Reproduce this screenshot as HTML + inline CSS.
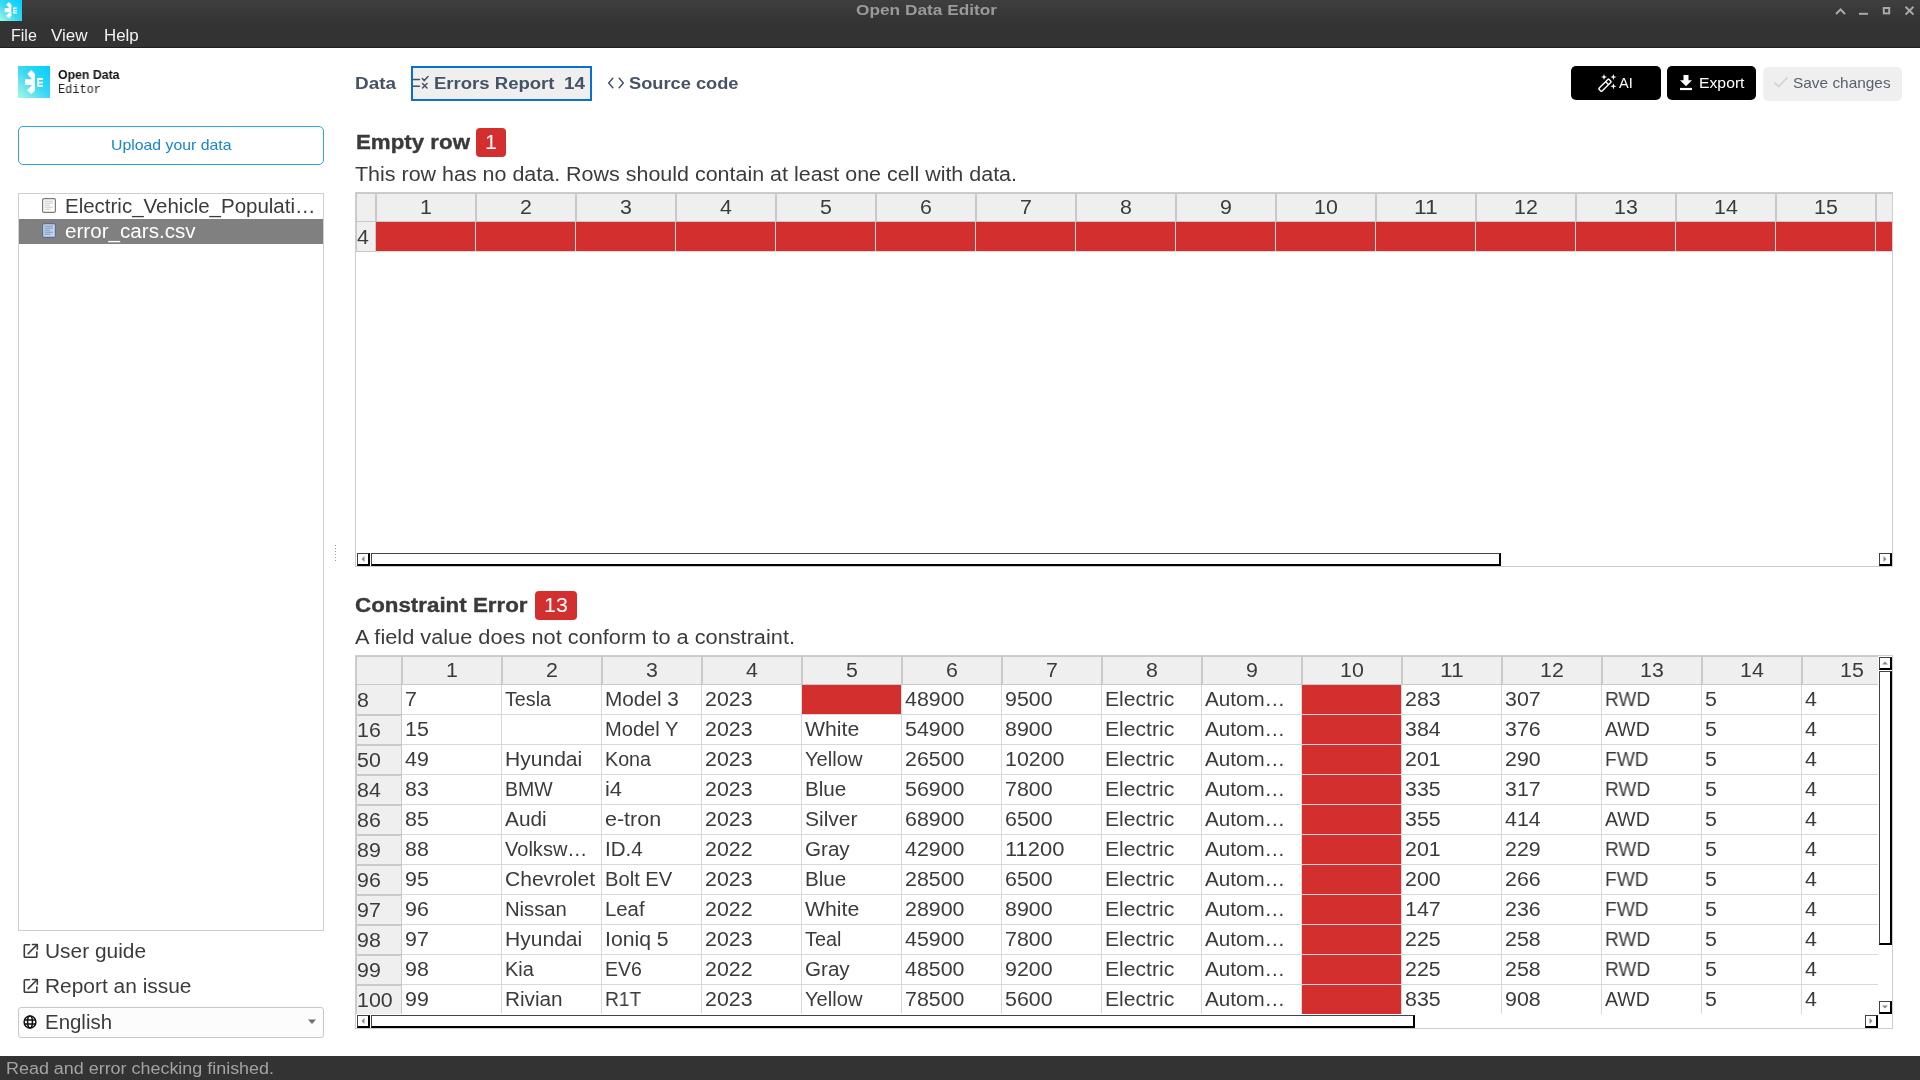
<!DOCTYPE html>
<html><head><meta charset="utf-8"><title>Open Data Editor</title>
<style>
html,body{margin:0;padding:0;width:1920px;height:1080px;overflow:hidden;background:#fff}
body>div{position:absolute}
.t{white-space:nowrap;transform-origin:0 50%;will-change:transform}
</style></head><body>
<div style="left:0px;top:0px;width:1920px;height:47px;background:linear-gradient(#3f3f3f 0px,#333 24px,#333 47px)"></div>
<div style="left:0px;top:47px;width:1920px;height:1px;background:#1f1f1f"></div>
<svg style="position:absolute;left:0;top:0" width="22" height="21" viewBox="0 0 22 21">
<defs><linearGradient id="g1" x1="0" y1="1" x2="1" y2="0"><stop offset="0" stop-color="#a8f8e8"/><stop offset="0.45" stop-color="#38d8f2"/><stop offset="1" stop-color="#00ceff"/></linearGradient></defs>
<rect width="22" height="21" fill="url(#g1)"/>
<g transform="translate(-0.1 -0.7) scale(0.68)"><path d="M13.2 4 L17 8 L17 13.7 Q15.9 16.3 17 19.3 L17 24.7 L13.2 28 L9 24.3 L14 19 L7 19 L7 13.2 L14 13.2 L9.2 8 Z" fill="#fff"/><path d="M19.3 12H25V14H21V15.8H25V17.5H21V19H25V20.7H19.3Z" fill="#fff"/></g>
</svg>
<div class="t" style="left:856.00px;top:2px;font-size:15px;line-height:15px;color:#9a9a9a;font-weight:bold;transform:scaleX(1.1509);font-family:'Liberation Sans',sans-serif;">Open Data Editor</div>
<svg style="position:absolute;left:1830px;top:0" width="90" height="22" viewBox="0 0 90 22">
<g stroke="#a9a9a9" stroke-width="2" fill="none">
<path d="M6 14 L10.5 9.5 L15 14"/>
<path d="M29 13.8 L38 13.8"/>
<rect x="53.8" y="8" width="5.4" height="5.4"/>
<path d="M75.5 6.8 L83.5 14.6 M83.5 6.8 L75.5 14.6"/>
</g></svg>
<div class="t" style="left:10.60px;top:28px;font-size:16px;line-height:16px;color:#f2f2f2;transform:scaleX(0.9890);font-family:'Liberation Sans',sans-serif;">File</div>
<div class="t" style="left:51.40px;top:28px;font-size:16px;line-height:16px;color:#f2f2f2;transform:scaleX(1.0642);font-family:'Liberation Sans',sans-serif;">View</div>
<div class="t" style="left:104.20px;top:28px;font-size:16px;line-height:16px;color:#f2f2f2;transform:scaleX(1.0545);font-family:'Liberation Sans',sans-serif;">Help</div>
<div style="left:0px;top:1056px;width:1920px;height:24px;background:#333"></div>
<div class="t" style="left:6.00px;top:1061px;font-size:16px;line-height:16px;color:#a3a3a3;transform:scaleX(1.1201);font-family:'Liberation Sans',sans-serif;">Read and error checking finished.</div>
<svg style="position:absolute;left:18px;top:66px" width="32" height="32" viewBox="0 0 32 32">
<defs><linearGradient id="g2" x1="0" y1="1" x2="1" y2="0"><stop offset="0" stop-color="#a6f8e6"/><stop offset="0.5" stop-color="#3ad8f2"/><stop offset="1" stop-color="#00ceff"/></linearGradient></defs>
<rect width="32" height="32" fill="url(#g2)"/>
<path d="M13.2 4 L17 8 L17 13.7 Q15.9 16.3 17 19.3 L17 24.7 L13.2 28 L9 24.3 L14 19 L7 19 L7 13.2 L14 13.2 L9.2 8 Z" fill="#fff"/><path d="M19.3 12H25V14H21V15.8H25V17.5H21V19H25V20.7H19.3Z" fill="#fff"/>
</svg>
<div class="t" style="left:58.00px;top:69px;font-size:12.5px;line-height:12.5px;color:#111;font-weight:bold;transform:scaleX(0.9838);font-family:'Liberation Sans',sans-serif;">Open Data</div>
<div class="t" style="left:58.40px;top:84px;font-size:12.5px;line-height:12.5px;color:#222;transform:scaleX(0.9554);font-family:'Liberation Mono',monospace;">Editor</div>
<div style="left:18px;top:126px;width:306px;height:39px;box-sizing:border-box;border:1px solid #2aa4ea;border-radius:5px;background:#fff"></div>
<div class="t" style="left:110.50px;top:137px;font-size:15px;line-height:15px;color:#1a86d0;transform:scaleX(1.0547);font-family:'Liberation Sans',sans-serif;">Upload your data</div>
<div style="left:18px;top:193px;width:306px;height:738px;box-sizing:border-box;border:1px solid #cfcfcf;background:#fff"></div>
<div style="left:19px;top:219px;width:304px;height:25px;background:#808080"></div>
<svg style="position:absolute;left:42px;top:198px" width="14" height="15" viewBox="0 0 14 15">
<rect x="0.6" y="0.6" width="12.8" height="13.8" rx="1.5" fill="#fff" stroke="#7a7a7a" stroke-width="1.2"/>
<g stroke="#bdbdbd" stroke-width="0.8"><path d="M2.5 3.2H11M2.5 5.2H11M2.5 7.2H8M2.5 9.2H11M2.5 11.2H8.5"/></g></svg>
<svg style="position:absolute;left:42px;top:223px" width="14" height="15" viewBox="0 0 14 15">
<rect x="0.6" y="0.6" width="12.8" height="13.8" rx="1.5" fill="#c3d5ee" stroke="#59708f" stroke-width="1.2"/>
<g stroke="#6f87a8" stroke-width="0.8"><path d="M2.5 3.2H11M2.5 5.2H11M2.5 7.2H8M2.5 9.2H11M2.5 11.2H8.5"/></g></svg>
<div class="t" style="left:64.50px;top:197px;font-size:19.5px;line-height:19.5px;color:#3b3b3b;transform:scaleX(1.0504);font-family:'Liberation Sans',sans-serif;">Electric_Vehicle_Populati…</div>
<div class="t" style="left:64.50px;top:222px;font-size:19.5px;line-height:19.5px;color:#ffffff;transform:scaleX(1.0574);font-family:'Liberation Sans',sans-serif;">error_cars.csv</div>
<svg style="position:absolute;left:23px;top:943px" width="16" height="16" viewBox="0 0 16 16">
<g stroke="#3b3b3b" stroke-width="1.6" fill="none" stroke-linecap="round" stroke-linejoin="round">
<path d="M6.5 1.8H2.2Q1.3 1.8 1.3 2.7V13.4Q1.3 14.3 2.2 14.3H12.9Q13.8 14.3 13.8 13.4V9"/>
<path d="M9.5 1.5H14.3V6.3"/><path d="M14 1.8L5.2 10.6"/></g></svg>
<div class="t" style="left:45.00px;top:942px;font-size:19.5px;line-height:19.5px;color:#3b3b3b;transform:scaleX(1.0710);font-family:'Liberation Sans',sans-serif;">User guide</div>
<svg style="position:absolute;left:23px;top:978px" width="16" height="16" viewBox="0 0 16 16">
<g stroke="#3b3b3b" stroke-width="1.6" fill="none" stroke-linecap="round" stroke-linejoin="round">
<path d="M6.5 1.8H2.2Q1.3 1.8 1.3 2.7V13.4Q1.3 14.3 2.2 14.3H12.9Q13.8 14.3 13.8 13.4V9"/>
<path d="M9.5 1.5H14.3V6.3"/><path d="M14 1.8L5.2 10.6"/></g></svg>
<div class="t" style="left:45.00px;top:977px;font-size:19.5px;line-height:19.5px;color:#3b3b3b;transform:scaleX(1.0726);font-family:'Liberation Sans',sans-serif;">Report an issue</div>
<div style="left:18px;top:1007px;width:306px;height:31px;box-sizing:border-box;border:1px solid #c9c9c9;border-radius:3px;background:#fcfcfc"></div>
<svg style="position:absolute;left:23px;top:1015px" width="14" height="14" viewBox="0 0 14 14">
<g stroke="#111" stroke-width="1.5" fill="none"><circle cx="7" cy="7" r="5.9"/><ellipse cx="7" cy="7" rx="2.4" ry="5.9"/><path d="M1.2 5H12.8M1.2 9H12.8"/></g></svg>
<div class="t" style="left:44.50px;top:1013px;font-size:19.5px;line-height:19.5px;color:#3b3b3b;transform:scaleX(1.0476);font-family:'Liberation Sans',sans-serif;">English</div>
<svg style="position:absolute;left:307px;top:1019px" width="10" height="6" viewBox="0 0 10 6"><path d="M1 0.5H9L5 5Z" fill="#6e6e6e"/></svg>
<div style="left:335px;top:545px;width:1px;height:1px;background:#9a9a9a"></div>
<div style="left:335px;top:548px;width:1px;height:1px;background:#9a9a9a"></div>
<div style="left:335px;top:551px;width:1px;height:1px;background:#9a9a9a"></div>
<div style="left:335px;top:554px;width:1px;height:1px;background:#9a9a9a"></div>
<div style="left:335px;top:557px;width:1px;height:1px;background:#9a9a9a"></div>
<div style="left:335px;top:560px;width:1px;height:1px;background:#9a9a9a"></div>
<div class="t" style="left:354.50px;top:76px;font-size:16px;line-height:16px;color:#465266;font-weight:bold;transform:scaleX(1.1822);font-family:'Liberation Sans',sans-serif;">Data</div>
<div style="left:411px;top:66px;width:181px;height:35px;box-sizing:border-box;border:2px solid #0a6fd3;background:#efefef"></div>
<svg style="position:absolute;left:412px;top:75px" width="18" height="16" viewBox="0 0 18 16">
<g stroke="#465266" stroke-width="1.5" fill="none" stroke-linecap="round">
<path d="M1 4.5H7.5M1 11.3H7.5"/><path d="M10.3 3.6L12.2 5.6L16 1.6"/><path d="M10.5 8.5L15 13M15 8.5L10.5 13"/></g></svg>
<div class="t" style="left:433.80px;top:76px;font-size:16px;line-height:16px;color:#465266;font-weight:bold;transform:scaleX(1.1584);font-family:'Liberation Sans',sans-serif;">Errors Report</div>
<div class="t" style="left:563.50px;top:76px;font-size:16px;line-height:16px;color:#465266;font-weight:bold;transform:scaleX(1.1799);font-family:'Liberation Sans',sans-serif;">14</div>
<svg style="position:absolute;left:606px;top:76px" width="20" height="14" viewBox="0 0 20 14">
<g stroke="#465266" stroke-width="1.5" fill="none" stroke-linecap="round" stroke-linejoin="round">
<path d="M6.8 2.2L2.7 7L6.8 11.8"/><path d="M13.2 2.2L17.3 7L13.2 11.8"/></g></svg>
<div class="t" style="left:628.60px;top:76px;font-size:16px;line-height:16px;color:#465266;font-weight:bold;transform:scaleX(1.1402);font-family:'Liberation Sans',sans-serif;">Source code</div>
<div style="left:1571px;top:66px;width:90px;height:34px;background:#000;border-radius:5px"></div>
<svg style="position:absolute;left:1597px;top:72.5px" width="20" height="20" viewBox="0 0 20 20">
<g fill="#fff"><path d="M7 0.9L7.8 3.2L10.1 4L7.8 4.8L7 7.1L6.2 4.8L3.9 4L6.2 3.2Z"/><path d="M16.4 0.9L17.2 3.2L19.5 4L17.2 4.8L16.4 7.1L15.6 4.8L13.3 4L15.6 3.2Z"/><path d="M16.4 10.2L17.2 12.5L19.5 13.3L17.2 14.1L16.4 16.4L15.6 14.1L13.3 13.3L15.6 12.5Z"/></g>
<g transform="translate(3 17.2) rotate(-45)"><rect x="0" y="-2" width="14" height="4" rx="0.6" fill="none" stroke="#fff" stroke-width="1.4"/><path d="M10 -2V2" stroke="#fff" stroke-width="1.4"/></g>
</svg>
<div class="t" style="left:1618.50px;top:76px;font-size:14.5px;line-height:14.5px;color:#fff;transform:scaleX(0.9854);font-family:'Liberation Sans',sans-serif;">AI</div>
<div style="left:1667px;top:66px;width:89px;height:34px;background:#000;border-radius:5px"></div>
<svg style="position:absolute;left:1679px;top:74px" width="14" height="17" viewBox="0 0 14 17">
<g fill="#fff"><rect x="4.5" y="1" width="5" height="6"/><path d="M1 6.2H13L7 12.3Z"/><rect x="1" y="13.9" width="12" height="2.2"/></g></svg>
<div class="t" style="left:1698.50px;top:76px;font-size:14.5px;line-height:14.5px;color:#fff;transform:scaleX(1.0857);font-family:'Liberation Sans',sans-serif;">Export</div>
<div style="left:1763px;top:67px;width:139px;height:34px;background:#efefef;border-radius:5px"></div>
<svg style="position:absolute;left:1773px;top:75px" width="16" height="14" viewBox="0 0 16 14"><path d="M1.5 7.5L5.5 11.5L14.5 2.5" stroke="#d2d2d2" stroke-width="1.6" fill="none"/></svg>
<div class="t" style="left:1793.00px;top:76px;font-size:14.5px;line-height:14.5px;color:#59616e;transform:scaleX(1.0620);font-family:'Liberation Sans',sans-serif;">Save changes</div>
<div class="t" style="left:355.50px;top:133px;font-size:19.5px;line-height:19.5px;color:#3a3a3a;font-weight:bold;transform:scaleX(1.1436);font-family:'Liberation Sans',sans-serif;-webkit-text-stroke:0.35px #3a3a3a">Empty row</div>
<div style="left:476px;top:128px;width:30px;height:29px;background:#d32f2f;border-radius:4px"></div>
<div class="t" style="left:484.60px;top:133px;font-size:19.5px;line-height:19.5px;color:#fff;transform:scaleX(1.0953);font-family:'Liberation Sans',sans-serif;">1</div>
<div class="t" style="left:354.50px;top:165px;font-size:19.5px;line-height:19.5px;color:#3b3b3b;transform:scaleX(1.1004);font-family:'Liberation Sans',sans-serif;">This row has no data. Rows should contain at least one cell with data.</div>
<div class="t" style="left:355.00px;top:596px;font-size:19.5px;line-height:19.5px;color:#3a3a3a;font-weight:bold;transform:scaleX(1.1454);font-family:'Liberation Sans',sans-serif;-webkit-text-stroke:0.35px #3a3a3a">Constraint Error</div>
<div style="left:535px;top:591px;width:42px;height:29px;background:#d32f2f;border-radius:4px"></div>
<div class="t" style="left:543.50px;top:596px;font-size:19.5px;line-height:19.5px;color:#fff;transform:scaleX(1.0953);font-family:'Liberation Sans',sans-serif;">13</div>
<div class="t" style="left:355.00px;top:628px;font-size:19.5px;line-height:19.5px;color:#3b3b3b;transform:scaleX(1.1151);font-family:'Liberation Sans',sans-serif;">A field value does not conform to a constraint.</div>
<div style="left:355px;top:192px;width:1538px;height:375px;box-sizing:border-box;border:1px solid #cdcdcd;background:#fff"></div>
<div style="left:356px;top:193px;width:1536px;height:1px;background:#c9c9c9"></div>
<div style="left:356px;top:194px;width:1536px;height:27px;background:#efefef"></div>
<div style="left:356px;top:221px;width:1536px;height:1px;background:#c9c9c9"></div>
<div style="left:356px;top:194px;width:1px;height:57px;background:#c9c9c9"></div>
<div style="left:357px;top:222px;width:18px;height:29px;background:#efefef"></div>
<div style="left:356px;top:251px;width:20px;height:1px;background:#c9c9c9"></div>
<div style="left:375px;top:194px;width:2px;height:27px;background:#c9c9c9"></div>
<div style="left:375px;top:222px;width:1px;height:29px;background:#c9c9c9"></div>
<div style="left:376px;top:222px;width:99px;height:29px;background:#d32f2f"></div>
<div style="left:475px;top:194px;width:2px;height:27px;background:#c9c9c9"></div>
<div style="left:475px;top:222px;width:1px;height:29px;background:#d6d6d6"></div>
<div class="t" style="left:419.56px;top:198px;font-size:19.5px;line-height:19.5px;color:#3b3b3b;transform:scaleX(1.0953);font-family:'Liberation Sans',sans-serif;">1</div>
<div style="left:476px;top:222px;width:99px;height:29px;background:#d32f2f"></div>
<div style="left:575px;top:194px;width:2px;height:27px;background:#c9c9c9"></div>
<div style="left:575px;top:222px;width:1px;height:29px;background:#d6d6d6"></div>
<div class="t" style="left:519.56px;top:198px;font-size:19.5px;line-height:19.5px;color:#3b3b3b;transform:scaleX(1.0953);font-family:'Liberation Sans',sans-serif;">2</div>
<div style="left:576px;top:222px;width:99px;height:29px;background:#d32f2f"></div>
<div style="left:675px;top:194px;width:2px;height:27px;background:#c9c9c9"></div>
<div style="left:675px;top:222px;width:1px;height:29px;background:#d6d6d6"></div>
<div class="t" style="left:619.56px;top:198px;font-size:19.5px;line-height:19.5px;color:#3b3b3b;transform:scaleX(1.0953);font-family:'Liberation Sans',sans-serif;">3</div>
<div style="left:676px;top:222px;width:99px;height:29px;background:#d32f2f"></div>
<div style="left:775px;top:194px;width:2px;height:27px;background:#c9c9c9"></div>
<div style="left:775px;top:222px;width:1px;height:29px;background:#d6d6d6"></div>
<div class="t" style="left:719.56px;top:198px;font-size:19.5px;line-height:19.5px;color:#3b3b3b;transform:scaleX(1.0953);font-family:'Liberation Sans',sans-serif;">4</div>
<div style="left:776px;top:222px;width:99px;height:29px;background:#d32f2f"></div>
<div style="left:875px;top:194px;width:2px;height:27px;background:#c9c9c9"></div>
<div style="left:875px;top:222px;width:1px;height:29px;background:#d6d6d6"></div>
<div class="t" style="left:819.56px;top:198px;font-size:19.5px;line-height:19.5px;color:#3b3b3b;transform:scaleX(1.0953);font-family:'Liberation Sans',sans-serif;">5</div>
<div style="left:876px;top:222px;width:99px;height:29px;background:#d32f2f"></div>
<div style="left:975px;top:194px;width:2px;height:27px;background:#c9c9c9"></div>
<div style="left:975px;top:222px;width:1px;height:29px;background:#d6d6d6"></div>
<div class="t" style="left:919.56px;top:198px;font-size:19.5px;line-height:19.5px;color:#3b3b3b;transform:scaleX(1.0953);font-family:'Liberation Sans',sans-serif;">6</div>
<div style="left:976px;top:222px;width:99px;height:29px;background:#d32f2f"></div>
<div style="left:1075px;top:194px;width:2px;height:27px;background:#c9c9c9"></div>
<div style="left:1075px;top:222px;width:1px;height:29px;background:#d6d6d6"></div>
<div class="t" style="left:1019.56px;top:198px;font-size:19.5px;line-height:19.5px;color:#3b3b3b;transform:scaleX(1.0953);font-family:'Liberation Sans',sans-serif;">7</div>
<div style="left:1076px;top:222px;width:99px;height:29px;background:#d32f2f"></div>
<div style="left:1175px;top:194px;width:2px;height:27px;background:#c9c9c9"></div>
<div style="left:1175px;top:222px;width:1px;height:29px;background:#d6d6d6"></div>
<div class="t" style="left:1119.56px;top:198px;font-size:19.5px;line-height:19.5px;color:#3b3b3b;transform:scaleX(1.0953);font-family:'Liberation Sans',sans-serif;">8</div>
<div style="left:1176px;top:222px;width:99px;height:29px;background:#d32f2f"></div>
<div style="left:1275px;top:194px;width:2px;height:27px;background:#c9c9c9"></div>
<div style="left:1275px;top:222px;width:1px;height:29px;background:#d6d6d6"></div>
<div class="t" style="left:1219.56px;top:198px;font-size:19.5px;line-height:19.5px;color:#3b3b3b;transform:scaleX(1.0953);font-family:'Liberation Sans',sans-serif;">9</div>
<div style="left:1276px;top:222px;width:99px;height:29px;background:#d32f2f"></div>
<div style="left:1375px;top:194px;width:2px;height:27px;background:#c9c9c9"></div>
<div style="left:1375px;top:222px;width:1px;height:29px;background:#d6d6d6"></div>
<div class="t" style="left:1313.62px;top:198px;font-size:19.5px;line-height:19.5px;color:#3b3b3b;transform:scaleX(1.0953);font-family:'Liberation Sans',sans-serif;">10</div>
<div style="left:1376px;top:222px;width:99px;height:29px;background:#d32f2f"></div>
<div style="left:1475px;top:194px;width:2px;height:27px;background:#c9c9c9"></div>
<div style="left:1475px;top:222px;width:1px;height:29px;background:#d6d6d6"></div>
<div class="t" style="left:1413.62px;top:198px;font-size:19.5px;line-height:19.5px;color:#3b3b3b;transform:scaleX(1.1736);font-family:'Liberation Sans',sans-serif;">11</div>
<div style="left:1476px;top:222px;width:99px;height:29px;background:#d32f2f"></div>
<div style="left:1575px;top:194px;width:2px;height:27px;background:#c9c9c9"></div>
<div style="left:1575px;top:222px;width:1px;height:29px;background:#d6d6d6"></div>
<div class="t" style="left:1513.62px;top:198px;font-size:19.5px;line-height:19.5px;color:#3b3b3b;transform:scaleX(1.0953);font-family:'Liberation Sans',sans-serif;">12</div>
<div style="left:1576px;top:222px;width:99px;height:29px;background:#d32f2f"></div>
<div style="left:1675px;top:194px;width:2px;height:27px;background:#c9c9c9"></div>
<div style="left:1675px;top:222px;width:1px;height:29px;background:#d6d6d6"></div>
<div class="t" style="left:1613.62px;top:198px;font-size:19.5px;line-height:19.5px;color:#3b3b3b;transform:scaleX(1.0953);font-family:'Liberation Sans',sans-serif;">13</div>
<div style="left:1676px;top:222px;width:99px;height:29px;background:#d32f2f"></div>
<div style="left:1775px;top:194px;width:2px;height:27px;background:#c9c9c9"></div>
<div style="left:1775px;top:222px;width:1px;height:29px;background:#d6d6d6"></div>
<div class="t" style="left:1713.62px;top:198px;font-size:19.5px;line-height:19.5px;color:#3b3b3b;transform:scaleX(1.0953);font-family:'Liberation Sans',sans-serif;">14</div>
<div style="left:1776px;top:222px;width:99px;height:29px;background:#d32f2f"></div>
<div style="left:1875px;top:194px;width:2px;height:27px;background:#c9c9c9"></div>
<div style="left:1875px;top:222px;width:1px;height:29px;background:#d6d6d6"></div>
<div class="t" style="left:1813.62px;top:198px;font-size:19.5px;line-height:19.5px;color:#3b3b3b;transform:scaleX(1.0953);font-family:'Liberation Sans',sans-serif;">15</div>
<div style="left:1876px;top:222px;width:16px;height:29px;background:#d32f2f"></div>
<div style="left:376px;top:251px;width:1516px;height:1px;background:#d9d9d9"></div>
<div class="t" style="left:357.00px;top:228px;font-size:19.5px;line-height:19.5px;color:#3b3b3b;transform:scaleX(1.0953);font-family:'Liberation Sans',sans-serif;">4</div>
<div style="left:357px;top:553px;width:13px;height:13px;box-sizing:border-box;background:#fff;border-left:1px solid #444;border-top:1px solid #444;border-right:2px solid #000;border-bottom:2px solid #000"></div>
<svg style="position:absolute;left:0;top:0;width:1920px;height:1080px;overflow:visible" width="1920" height="1080"><path d="M364.5 556.0L361.5 559.0L364.5 562.0Z" fill="#8a8a8a"/></svg>
<div style="left:371px;top:553px;width:130px;height:13px;box-sizing:border-box;background:#fff;border-left:1px solid #444;border-top:1px solid #444;border-right:2px solid #000;border-bottom:2px solid #000"></div>
<div style="left:369px;top:553px;width:1px;height:13px;background:#000"></div>
<div style="left:371px;top:553px;width:1130px;height:13px;box-sizing:border-box;background:#fff;border-left:1px solid #444;border-top:1px solid #444;border-right:2px solid #000;border-bottom:2px solid #000"></div>
<div style="left:1879px;top:553px;width:13px;height:13px;box-sizing:border-box;background:#fff;border-left:1px solid #444;border-top:1px solid #444;border-right:2px solid #000;border-bottom:2px solid #000"></div>
<svg style="position:absolute;left:0;top:0;width:1920px;height:1080px;overflow:visible" width="1920" height="1080"><path d="M1883.5 556.0L1886.5 559.0L1883.5 562.0Z" fill="#8a8a8a"/></svg>
<div style="left:355px;top:655px;width:1538px;height:374px;box-sizing:border-box;border:1px solid #cdcdcd;background:#fff"></div>
<div style="left:356px;top:656px;width:1522px;height:1px;background:#c9c9c9"></div>
<div style="left:357px;top:657px;width:1521px;height:27px;background:#efefef"></div>
<div style="left:356px;top:657px;width:1px;height:357px;background:#c9c9c9"></div>
<div style="left:357px;top:684px;width:1521px;height:1px;background:#c9c9c9"></div>
<div style="left:357px;top:685px;width:44px;height:329px;background:#efefef"></div>
<div style="left:401px;top:657px;width:2px;height:27px;background:#c9c9c9"></div>
<div style="left:401px;top:685px;width:1px;height:329px;background:#c9c9c9"></div>
<div class="t" style="left:445.56px;top:661px;font-size:19.5px;line-height:19.5px;color:#3b3b3b;transform:scaleX(1.0953);font-family:'Liberation Sans',sans-serif;">1</div>
<div style="left:501px;top:657px;width:2px;height:27px;background:#c9c9c9"></div>
<div class="t" style="left:545.56px;top:661px;font-size:19.5px;line-height:19.5px;color:#3b3b3b;transform:scaleX(1.0953);font-family:'Liberation Sans',sans-serif;">2</div>
<div style="left:601px;top:657px;width:2px;height:27px;background:#c9c9c9"></div>
<div class="t" style="left:645.56px;top:661px;font-size:19.5px;line-height:19.5px;color:#3b3b3b;transform:scaleX(1.0953);font-family:'Liberation Sans',sans-serif;">3</div>
<div style="left:701px;top:657px;width:2px;height:27px;background:#c9c9c9"></div>
<div class="t" style="left:745.56px;top:661px;font-size:19.5px;line-height:19.5px;color:#3b3b3b;transform:scaleX(1.0953);font-family:'Liberation Sans',sans-serif;">4</div>
<div style="left:801px;top:657px;width:2px;height:27px;background:#c9c9c9"></div>
<div class="t" style="left:845.56px;top:661px;font-size:19.5px;line-height:19.5px;color:#3b3b3b;transform:scaleX(1.0953);font-family:'Liberation Sans',sans-serif;">5</div>
<div style="left:901px;top:657px;width:2px;height:27px;background:#c9c9c9"></div>
<div class="t" style="left:945.56px;top:661px;font-size:19.5px;line-height:19.5px;color:#3b3b3b;transform:scaleX(1.0953);font-family:'Liberation Sans',sans-serif;">6</div>
<div style="left:1001px;top:657px;width:2px;height:27px;background:#c9c9c9"></div>
<div class="t" style="left:1045.56px;top:661px;font-size:19.5px;line-height:19.5px;color:#3b3b3b;transform:scaleX(1.0953);font-family:'Liberation Sans',sans-serif;">7</div>
<div style="left:1101px;top:657px;width:2px;height:27px;background:#c9c9c9"></div>
<div class="t" style="left:1145.56px;top:661px;font-size:19.5px;line-height:19.5px;color:#3b3b3b;transform:scaleX(1.0953);font-family:'Liberation Sans',sans-serif;">8</div>
<div style="left:1201px;top:657px;width:2px;height:27px;background:#c9c9c9"></div>
<div class="t" style="left:1245.56px;top:661px;font-size:19.5px;line-height:19.5px;color:#3b3b3b;transform:scaleX(1.0953);font-family:'Liberation Sans',sans-serif;">9</div>
<div style="left:1301px;top:657px;width:2px;height:27px;background:#c9c9c9"></div>
<div class="t" style="left:1339.62px;top:661px;font-size:19.5px;line-height:19.5px;color:#3b3b3b;transform:scaleX(1.0953);font-family:'Liberation Sans',sans-serif;">10</div>
<div style="left:1401px;top:657px;width:2px;height:27px;background:#c9c9c9"></div>
<div class="t" style="left:1439.62px;top:661px;font-size:19.5px;line-height:19.5px;color:#3b3b3b;transform:scaleX(1.1736);font-family:'Liberation Sans',sans-serif;">11</div>
<div style="left:1501px;top:657px;width:2px;height:27px;background:#c9c9c9"></div>
<div class="t" style="left:1539.62px;top:661px;font-size:19.5px;line-height:19.5px;color:#3b3b3b;transform:scaleX(1.0953);font-family:'Liberation Sans',sans-serif;">12</div>
<div style="left:1601px;top:657px;width:2px;height:27px;background:#c9c9c9"></div>
<div class="t" style="left:1639.62px;top:661px;font-size:19.5px;line-height:19.5px;color:#3b3b3b;transform:scaleX(1.0953);font-family:'Liberation Sans',sans-serif;">13</div>
<div style="left:1701px;top:657px;width:2px;height:27px;background:#c9c9c9"></div>
<div class="t" style="left:1739.62px;top:661px;font-size:19.5px;line-height:19.5px;color:#3b3b3b;transform:scaleX(1.0953);font-family:'Liberation Sans',sans-serif;">14</div>
<div style="left:1801px;top:657px;width:2px;height:27px;background:#c9c9c9"></div>
<div class="t" style="left:1839.62px;top:661px;font-size:19.5px;line-height:19.5px;color:#3b3b3b;transform:scaleX(1.0953);font-family:'Liberation Sans',sans-serif;">15</div>
<div class="t" style="left:357.30px;top:691px;font-size:19.5px;line-height:19.5px;color:#3b3b3b;transform:scaleX(1.0953);font-family:'Liberation Sans',sans-serif;">8</div>
<div class="t" style="left:405.30px;top:690px;font-size:19.5px;line-height:19.5px;color:#3b3b3b;transform:scaleX(1.0953);font-family:'Liberation Sans',sans-serif;">7</div>
<div class="t" style="left:505.30px;top:690px;font-size:19.5px;line-height:19.5px;color:#3b3b3b;transform:scaleX(1.0121);font-family:'Liberation Sans',sans-serif;">Tesla</div>
<div class="t" style="left:605.30px;top:690px;font-size:19.5px;line-height:19.5px;color:#3b3b3b;transform:scaleX(1.0648);font-family:'Liberation Sans',sans-serif;">Model 3</div>
<div class="t" style="left:705.30px;top:690px;font-size:19.5px;line-height:19.5px;color:#3b3b3b;transform:scaleX(1.0953);font-family:'Liberation Sans',sans-serif;">2023</div>
<div style="left:802px;top:685px;width:99px;height:29px;background:#d32f2f"></div>
<div class="t" style="left:905.30px;top:690px;font-size:19.5px;line-height:19.5px;color:#3b3b3b;transform:scaleX(1.0953);font-family:'Liberation Sans',sans-serif;">48900</div>
<div class="t" style="left:1005.30px;top:690px;font-size:19.5px;line-height:19.5px;color:#3b3b3b;transform:scaleX(1.0953);font-family:'Liberation Sans',sans-serif;">9500</div>
<div class="t" style="left:1105.30px;top:690px;font-size:19.5px;line-height:19.5px;color:#3b3b3b;transform:scaleX(1.0822);font-family:'Liberation Sans',sans-serif;">Electric</div>
<div class="t" style="left:1205.30px;top:690px;font-size:19.5px;line-height:19.5px;color:#3b3b3b;transform:scaleX(1.0573);font-family:'Liberation Sans',sans-serif;">Autom…</div>
<div style="left:1302px;top:685px;width:99px;height:29px;background:#d32f2f"></div>
<div class="t" style="left:1405.30px;top:690px;font-size:19.5px;line-height:19.5px;color:#3b3b3b;transform:scaleX(1.0953);font-family:'Liberation Sans',sans-serif;">283</div>
<div class="t" style="left:1505.30px;top:690px;font-size:19.5px;line-height:19.5px;color:#3b3b3b;transform:scaleX(1.0953);font-family:'Liberation Sans',sans-serif;">307</div>
<div class="t" style="left:1605.30px;top:690px;font-size:19.5px;line-height:19.5px;color:#3b3b3b;transform:scaleX(0.9748);font-family:'Liberation Sans',sans-serif;">RWD</div>
<div class="t" style="left:1705.30px;top:690px;font-size:19.5px;line-height:19.5px;color:#3b3b3b;transform:scaleX(1.0953);font-family:'Liberation Sans',sans-serif;">5</div>
<div class="t" style="left:1805.30px;top:690px;font-size:19.5px;line-height:19.5px;color:#3b3b3b;transform:scaleX(1.0953);font-family:'Liberation Sans',sans-serif;">4</div>
<div style="left:357px;top:714px;width:44px;height:2px;background:#c9c9c9"></div>
<div style="left:402px;top:714px;width:1476px;height:1px;background:#d9d9d9"></div>
<div class="t" style="left:357.30px;top:721px;font-size:19.5px;line-height:19.5px;color:#3b3b3b;transform:scaleX(1.0953);font-family:'Liberation Sans',sans-serif;">16</div>
<div class="t" style="left:405.30px;top:720px;font-size:19.5px;line-height:19.5px;color:#3b3b3b;transform:scaleX(1.0953);font-family:'Liberation Sans',sans-serif;">15</div>
<div class="t" style="left:605.30px;top:720px;font-size:19.5px;line-height:19.5px;color:#3b3b3b;transform:scaleX(1.0310);font-family:'Liberation Sans',sans-serif;">Model Y</div>
<div class="t" style="left:705.30px;top:720px;font-size:19.5px;line-height:19.5px;color:#3b3b3b;transform:scaleX(1.0953);font-family:'Liberation Sans',sans-serif;">2023</div>
<div class="t" style="left:805.30px;top:720px;font-size:19.5px;line-height:19.5px;color:#3b3b3b;transform:scaleX(1.0891);font-family:'Liberation Sans',sans-serif;">White</div>
<div class="t" style="left:905.30px;top:720px;font-size:19.5px;line-height:19.5px;color:#3b3b3b;transform:scaleX(1.0953);font-family:'Liberation Sans',sans-serif;">54900</div>
<div class="t" style="left:1005.30px;top:720px;font-size:19.5px;line-height:19.5px;color:#3b3b3b;transform:scaleX(1.0953);font-family:'Liberation Sans',sans-serif;">8900</div>
<div class="t" style="left:1105.30px;top:720px;font-size:19.5px;line-height:19.5px;color:#3b3b3b;transform:scaleX(1.0822);font-family:'Liberation Sans',sans-serif;">Electric</div>
<div class="t" style="left:1205.30px;top:720px;font-size:19.5px;line-height:19.5px;color:#3b3b3b;transform:scaleX(1.0573);font-family:'Liberation Sans',sans-serif;">Autom…</div>
<div style="left:1302px;top:715px;width:99px;height:29px;background:#d32f2f"></div>
<div class="t" style="left:1405.30px;top:720px;font-size:19.5px;line-height:19.5px;color:#3b3b3b;transform:scaleX(1.0953);font-family:'Liberation Sans',sans-serif;">384</div>
<div class="t" style="left:1505.30px;top:720px;font-size:19.5px;line-height:19.5px;color:#3b3b3b;transform:scaleX(1.0953);font-family:'Liberation Sans',sans-serif;">376</div>
<div class="t" style="left:1605.30px;top:720px;font-size:19.5px;line-height:19.5px;color:#3b3b3b;transform:scaleX(0.9959);font-family:'Liberation Sans',sans-serif;">AWD</div>
<div class="t" style="left:1705.30px;top:720px;font-size:19.5px;line-height:19.5px;color:#3b3b3b;transform:scaleX(1.0953);font-family:'Liberation Sans',sans-serif;">5</div>
<div class="t" style="left:1805.30px;top:720px;font-size:19.5px;line-height:19.5px;color:#3b3b3b;transform:scaleX(1.0953);font-family:'Liberation Sans',sans-serif;">4</div>
<div style="left:357px;top:744px;width:44px;height:2px;background:#c9c9c9"></div>
<div style="left:402px;top:744px;width:1476px;height:1px;background:#d9d9d9"></div>
<div class="t" style="left:357.30px;top:751px;font-size:19.5px;line-height:19.5px;color:#3b3b3b;transform:scaleX(1.0953);font-family:'Liberation Sans',sans-serif;">50</div>
<div class="t" style="left:405.30px;top:750px;font-size:19.5px;line-height:19.5px;color:#3b3b3b;transform:scaleX(1.0953);font-family:'Liberation Sans',sans-serif;">49</div>
<div class="t" style="left:505.30px;top:750px;font-size:19.5px;line-height:19.5px;color:#3b3b3b;transform:scaleX(1.0795);font-family:'Liberation Sans',sans-serif;">Hyundai</div>
<div class="t" style="left:605.30px;top:750px;font-size:19.5px;line-height:19.5px;color:#3b3b3b;transform:scaleX(1.0103);font-family:'Liberation Sans',sans-serif;">Kona</div>
<div class="t" style="left:705.30px;top:750px;font-size:19.5px;line-height:19.5px;color:#3b3b3b;transform:scaleX(1.0953);font-family:'Liberation Sans',sans-serif;">2023</div>
<div class="t" style="left:805.30px;top:750px;font-size:19.5px;line-height:19.5px;color:#3b3b3b;transform:scaleX(1.0327);font-family:'Liberation Sans',sans-serif;">Yellow</div>
<div class="t" style="left:905.30px;top:750px;font-size:19.5px;line-height:19.5px;color:#3b3b3b;transform:scaleX(1.0953);font-family:'Liberation Sans',sans-serif;">26500</div>
<div class="t" style="left:1005.30px;top:750px;font-size:19.5px;line-height:19.5px;color:#3b3b3b;transform:scaleX(1.0953);font-family:'Liberation Sans',sans-serif;">10200</div>
<div class="t" style="left:1105.30px;top:750px;font-size:19.5px;line-height:19.5px;color:#3b3b3b;transform:scaleX(1.0822);font-family:'Liberation Sans',sans-serif;">Electric</div>
<div class="t" style="left:1205.30px;top:750px;font-size:19.5px;line-height:19.5px;color:#3b3b3b;transform:scaleX(1.0573);font-family:'Liberation Sans',sans-serif;">Autom…</div>
<div style="left:1302px;top:745px;width:99px;height:29px;background:#d32f2f"></div>
<div class="t" style="left:1405.30px;top:750px;font-size:19.5px;line-height:19.5px;color:#3b3b3b;transform:scaleX(1.0953);font-family:'Liberation Sans',sans-serif;">201</div>
<div class="t" style="left:1505.30px;top:750px;font-size:19.5px;line-height:19.5px;color:#3b3b3b;transform:scaleX(1.0953);font-family:'Liberation Sans',sans-serif;">290</div>
<div class="t" style="left:1605.30px;top:750px;font-size:19.5px;line-height:19.5px;color:#3b3b3b;transform:scaleX(0.9815);font-family:'Liberation Sans',sans-serif;">FWD</div>
<div class="t" style="left:1705.30px;top:750px;font-size:19.5px;line-height:19.5px;color:#3b3b3b;transform:scaleX(1.0953);font-family:'Liberation Sans',sans-serif;">5</div>
<div class="t" style="left:1805.30px;top:750px;font-size:19.5px;line-height:19.5px;color:#3b3b3b;transform:scaleX(1.0953);font-family:'Liberation Sans',sans-serif;">4</div>
<div style="left:357px;top:774px;width:44px;height:2px;background:#c9c9c9"></div>
<div style="left:402px;top:774px;width:1476px;height:1px;background:#d9d9d9"></div>
<div class="t" style="left:357.30px;top:781px;font-size:19.5px;line-height:19.5px;color:#3b3b3b;transform:scaleX(1.0953);font-family:'Liberation Sans',sans-serif;">84</div>
<div class="t" style="left:405.30px;top:780px;font-size:19.5px;line-height:19.5px;color:#3b3b3b;transform:scaleX(1.0953);font-family:'Liberation Sans',sans-serif;">83</div>
<div class="t" style="left:505.30px;top:780px;font-size:19.5px;line-height:19.5px;color:#3b3b3b;transform:scaleX(0.9941);font-family:'Liberation Sans',sans-serif;">BMW</div>
<div class="t" style="left:605.30px;top:780px;font-size:19.5px;line-height:19.5px;color:#3b3b3b;transform:scaleX(1.1244);font-family:'Liberation Sans',sans-serif;">i4</div>
<div class="t" style="left:705.30px;top:780px;font-size:19.5px;line-height:19.5px;color:#3b3b3b;transform:scaleX(1.0953);font-family:'Liberation Sans',sans-serif;">2023</div>
<div class="t" style="left:805.30px;top:780px;font-size:19.5px;line-height:19.5px;color:#3b3b3b;transform:scaleX(1.0585);font-family:'Liberation Sans',sans-serif;">Blue</div>
<div class="t" style="left:905.30px;top:780px;font-size:19.5px;line-height:19.5px;color:#3b3b3b;transform:scaleX(1.0953);font-family:'Liberation Sans',sans-serif;">56900</div>
<div class="t" style="left:1005.30px;top:780px;font-size:19.5px;line-height:19.5px;color:#3b3b3b;transform:scaleX(1.0953);font-family:'Liberation Sans',sans-serif;">7800</div>
<div class="t" style="left:1105.30px;top:780px;font-size:19.5px;line-height:19.5px;color:#3b3b3b;transform:scaleX(1.0822);font-family:'Liberation Sans',sans-serif;">Electric</div>
<div class="t" style="left:1205.30px;top:780px;font-size:19.5px;line-height:19.5px;color:#3b3b3b;transform:scaleX(1.0573);font-family:'Liberation Sans',sans-serif;">Autom…</div>
<div style="left:1302px;top:775px;width:99px;height:29px;background:#d32f2f"></div>
<div class="t" style="left:1405.30px;top:780px;font-size:19.5px;line-height:19.5px;color:#3b3b3b;transform:scaleX(1.0953);font-family:'Liberation Sans',sans-serif;">335</div>
<div class="t" style="left:1505.30px;top:780px;font-size:19.5px;line-height:19.5px;color:#3b3b3b;transform:scaleX(1.0953);font-family:'Liberation Sans',sans-serif;">317</div>
<div class="t" style="left:1605.30px;top:780px;font-size:19.5px;line-height:19.5px;color:#3b3b3b;transform:scaleX(0.9748);font-family:'Liberation Sans',sans-serif;">RWD</div>
<div class="t" style="left:1705.30px;top:780px;font-size:19.5px;line-height:19.5px;color:#3b3b3b;transform:scaleX(1.0953);font-family:'Liberation Sans',sans-serif;">5</div>
<div class="t" style="left:1805.30px;top:780px;font-size:19.5px;line-height:19.5px;color:#3b3b3b;transform:scaleX(1.0953);font-family:'Liberation Sans',sans-serif;">4</div>
<div style="left:357px;top:804px;width:44px;height:2px;background:#c9c9c9"></div>
<div style="left:402px;top:804px;width:1476px;height:1px;background:#d9d9d9"></div>
<div class="t" style="left:357.30px;top:811px;font-size:19.5px;line-height:19.5px;color:#3b3b3b;transform:scaleX(1.0953);font-family:'Liberation Sans',sans-serif;">86</div>
<div class="t" style="left:405.30px;top:810px;font-size:19.5px;line-height:19.5px;color:#3b3b3b;transform:scaleX(1.0953);font-family:'Liberation Sans',sans-serif;">85</div>
<div class="t" style="left:505.30px;top:810px;font-size:19.5px;line-height:19.5px;color:#3b3b3b;transform:scaleX(1.0669);font-family:'Liberation Sans',sans-serif;">Audi</div>
<div class="t" style="left:605.30px;top:810px;font-size:19.5px;line-height:19.5px;color:#3b3b3b;transform:scaleX(1.1006);font-family:'Liberation Sans',sans-serif;">e-tron</div>
<div class="t" style="left:705.30px;top:810px;font-size:19.5px;line-height:19.5px;color:#3b3b3b;transform:scaleX(1.0953);font-family:'Liberation Sans',sans-serif;">2023</div>
<div class="t" style="left:805.30px;top:810px;font-size:19.5px;line-height:19.5px;color:#3b3b3b;transform:scaleX(1.0754);font-family:'Liberation Sans',sans-serif;">Silver</div>
<div class="t" style="left:905.30px;top:810px;font-size:19.5px;line-height:19.5px;color:#3b3b3b;transform:scaleX(1.0953);font-family:'Liberation Sans',sans-serif;">68900</div>
<div class="t" style="left:1005.30px;top:810px;font-size:19.5px;line-height:19.5px;color:#3b3b3b;transform:scaleX(1.0953);font-family:'Liberation Sans',sans-serif;">6500</div>
<div class="t" style="left:1105.30px;top:810px;font-size:19.5px;line-height:19.5px;color:#3b3b3b;transform:scaleX(1.0822);font-family:'Liberation Sans',sans-serif;">Electric</div>
<div class="t" style="left:1205.30px;top:810px;font-size:19.5px;line-height:19.5px;color:#3b3b3b;transform:scaleX(1.0573);font-family:'Liberation Sans',sans-serif;">Autom…</div>
<div style="left:1302px;top:805px;width:99px;height:29px;background:#d32f2f"></div>
<div class="t" style="left:1405.30px;top:810px;font-size:19.5px;line-height:19.5px;color:#3b3b3b;transform:scaleX(1.0953);font-family:'Liberation Sans',sans-serif;">355</div>
<div class="t" style="left:1505.30px;top:810px;font-size:19.5px;line-height:19.5px;color:#3b3b3b;transform:scaleX(1.0953);font-family:'Liberation Sans',sans-serif;">414</div>
<div class="t" style="left:1605.30px;top:810px;font-size:19.5px;line-height:19.5px;color:#3b3b3b;transform:scaleX(0.9959);font-family:'Liberation Sans',sans-serif;">AWD</div>
<div class="t" style="left:1705.30px;top:810px;font-size:19.5px;line-height:19.5px;color:#3b3b3b;transform:scaleX(1.0953);font-family:'Liberation Sans',sans-serif;">5</div>
<div class="t" style="left:1805.30px;top:810px;font-size:19.5px;line-height:19.5px;color:#3b3b3b;transform:scaleX(1.0953);font-family:'Liberation Sans',sans-serif;">4</div>
<div style="left:357px;top:834px;width:44px;height:2px;background:#c9c9c9"></div>
<div style="left:402px;top:834px;width:1476px;height:1px;background:#d9d9d9"></div>
<div class="t" style="left:357.30px;top:841px;font-size:19.5px;line-height:19.5px;color:#3b3b3b;transform:scaleX(1.0953);font-family:'Liberation Sans',sans-serif;">89</div>
<div class="t" style="left:405.30px;top:840px;font-size:19.5px;line-height:19.5px;color:#3b3b3b;transform:scaleX(1.0953);font-family:'Liberation Sans',sans-serif;">88</div>
<div class="t" style="left:505.30px;top:840px;font-size:19.5px;line-height:19.5px;color:#3b3b3b;transform:scaleX(1.0277);font-family:'Liberation Sans',sans-serif;">Volksw…</div>
<div class="t" style="left:605.30px;top:840px;font-size:19.5px;line-height:19.5px;color:#3b3b3b;transform:scaleX(1.0541);font-family:'Liberation Sans',sans-serif;">ID.4</div>
<div class="t" style="left:705.30px;top:840px;font-size:19.5px;line-height:19.5px;color:#3b3b3b;transform:scaleX(1.0953);font-family:'Liberation Sans',sans-serif;">2022</div>
<div class="t" style="left:805.30px;top:840px;font-size:19.5px;line-height:19.5px;color:#3b3b3b;transform:scaleX(1.0563);font-family:'Liberation Sans',sans-serif;">Gray</div>
<div class="t" style="left:905.30px;top:840px;font-size:19.5px;line-height:19.5px;color:#3b3b3b;transform:scaleX(1.0953);font-family:'Liberation Sans',sans-serif;">42900</div>
<div class="t" style="left:1005.30px;top:840px;font-size:19.5px;line-height:19.5px;color:#3b3b3b;transform:scaleX(1.1253);font-family:'Liberation Sans',sans-serif;">11200</div>
<div class="t" style="left:1105.30px;top:840px;font-size:19.5px;line-height:19.5px;color:#3b3b3b;transform:scaleX(1.0822);font-family:'Liberation Sans',sans-serif;">Electric</div>
<div class="t" style="left:1205.30px;top:840px;font-size:19.5px;line-height:19.5px;color:#3b3b3b;transform:scaleX(1.0573);font-family:'Liberation Sans',sans-serif;">Autom…</div>
<div style="left:1302px;top:835px;width:99px;height:29px;background:#d32f2f"></div>
<div class="t" style="left:1405.30px;top:840px;font-size:19.5px;line-height:19.5px;color:#3b3b3b;transform:scaleX(1.0953);font-family:'Liberation Sans',sans-serif;">201</div>
<div class="t" style="left:1505.30px;top:840px;font-size:19.5px;line-height:19.5px;color:#3b3b3b;transform:scaleX(1.0953);font-family:'Liberation Sans',sans-serif;">229</div>
<div class="t" style="left:1605.30px;top:840px;font-size:19.5px;line-height:19.5px;color:#3b3b3b;transform:scaleX(0.9748);font-family:'Liberation Sans',sans-serif;">RWD</div>
<div class="t" style="left:1705.30px;top:840px;font-size:19.5px;line-height:19.5px;color:#3b3b3b;transform:scaleX(1.0953);font-family:'Liberation Sans',sans-serif;">5</div>
<div class="t" style="left:1805.30px;top:840px;font-size:19.5px;line-height:19.5px;color:#3b3b3b;transform:scaleX(1.0953);font-family:'Liberation Sans',sans-serif;">4</div>
<div style="left:357px;top:864px;width:44px;height:2px;background:#c9c9c9"></div>
<div style="left:402px;top:864px;width:1476px;height:1px;background:#d9d9d9"></div>
<div class="t" style="left:357.30px;top:871px;font-size:19.5px;line-height:19.5px;color:#3b3b3b;transform:scaleX(1.0953);font-family:'Liberation Sans',sans-serif;">96</div>
<div class="t" style="left:405.30px;top:870px;font-size:19.5px;line-height:19.5px;color:#3b3b3b;transform:scaleX(1.0953);font-family:'Liberation Sans',sans-serif;">95</div>
<div class="t" style="left:505.30px;top:870px;font-size:19.5px;line-height:19.5px;color:#3b3b3b;transform:scaleX(1.0794);font-family:'Liberation Sans',sans-serif;">Chevrolet</div>
<div class="t" style="left:605.30px;top:870px;font-size:19.5px;line-height:19.5px;color:#3b3b3b;transform:scaleX(1.0339);font-family:'Liberation Sans',sans-serif;">Bolt EV</div>
<div class="t" style="left:705.30px;top:870px;font-size:19.5px;line-height:19.5px;color:#3b3b3b;transform:scaleX(1.0953);font-family:'Liberation Sans',sans-serif;">2023</div>
<div class="t" style="left:805.30px;top:870px;font-size:19.5px;line-height:19.5px;color:#3b3b3b;transform:scaleX(1.0585);font-family:'Liberation Sans',sans-serif;">Blue</div>
<div class="t" style="left:905.30px;top:870px;font-size:19.5px;line-height:19.5px;color:#3b3b3b;transform:scaleX(1.0953);font-family:'Liberation Sans',sans-serif;">28500</div>
<div class="t" style="left:1005.30px;top:870px;font-size:19.5px;line-height:19.5px;color:#3b3b3b;transform:scaleX(1.0953);font-family:'Liberation Sans',sans-serif;">6500</div>
<div class="t" style="left:1105.30px;top:870px;font-size:19.5px;line-height:19.5px;color:#3b3b3b;transform:scaleX(1.0822);font-family:'Liberation Sans',sans-serif;">Electric</div>
<div class="t" style="left:1205.30px;top:870px;font-size:19.5px;line-height:19.5px;color:#3b3b3b;transform:scaleX(1.0573);font-family:'Liberation Sans',sans-serif;">Autom…</div>
<div style="left:1302px;top:865px;width:99px;height:29px;background:#d32f2f"></div>
<div class="t" style="left:1405.30px;top:870px;font-size:19.5px;line-height:19.5px;color:#3b3b3b;transform:scaleX(1.0953);font-family:'Liberation Sans',sans-serif;">200</div>
<div class="t" style="left:1505.30px;top:870px;font-size:19.5px;line-height:19.5px;color:#3b3b3b;transform:scaleX(1.0953);font-family:'Liberation Sans',sans-serif;">266</div>
<div class="t" style="left:1605.30px;top:870px;font-size:19.5px;line-height:19.5px;color:#3b3b3b;transform:scaleX(0.9815);font-family:'Liberation Sans',sans-serif;">FWD</div>
<div class="t" style="left:1705.30px;top:870px;font-size:19.5px;line-height:19.5px;color:#3b3b3b;transform:scaleX(1.0953);font-family:'Liberation Sans',sans-serif;">5</div>
<div class="t" style="left:1805.30px;top:870px;font-size:19.5px;line-height:19.5px;color:#3b3b3b;transform:scaleX(1.0953);font-family:'Liberation Sans',sans-serif;">4</div>
<div style="left:357px;top:894px;width:44px;height:2px;background:#c9c9c9"></div>
<div style="left:402px;top:894px;width:1476px;height:1px;background:#d9d9d9"></div>
<div class="t" style="left:357.30px;top:901px;font-size:19.5px;line-height:19.5px;color:#3b3b3b;transform:scaleX(1.0953);font-family:'Liberation Sans',sans-serif;">97</div>
<div class="t" style="left:405.30px;top:900px;font-size:19.5px;line-height:19.5px;color:#3b3b3b;transform:scaleX(1.0953);font-family:'Liberation Sans',sans-serif;">96</div>
<div class="t" style="left:505.30px;top:900px;font-size:19.5px;line-height:19.5px;color:#3b3b3b;transform:scaleX(1.0382);font-family:'Liberation Sans',sans-serif;">Nissan</div>
<div class="t" style="left:605.30px;top:900px;font-size:19.5px;line-height:19.5px;color:#3b3b3b;transform:scaleX(1.0427);font-family:'Liberation Sans',sans-serif;">Leaf</div>
<div class="t" style="left:705.30px;top:900px;font-size:19.5px;line-height:19.5px;color:#3b3b3b;transform:scaleX(1.0953);font-family:'Liberation Sans',sans-serif;">2022</div>
<div class="t" style="left:805.30px;top:900px;font-size:19.5px;line-height:19.5px;color:#3b3b3b;transform:scaleX(1.0891);font-family:'Liberation Sans',sans-serif;">White</div>
<div class="t" style="left:905.30px;top:900px;font-size:19.5px;line-height:19.5px;color:#3b3b3b;transform:scaleX(1.0953);font-family:'Liberation Sans',sans-serif;">28900</div>
<div class="t" style="left:1005.30px;top:900px;font-size:19.5px;line-height:19.5px;color:#3b3b3b;transform:scaleX(1.0953);font-family:'Liberation Sans',sans-serif;">8900</div>
<div class="t" style="left:1105.30px;top:900px;font-size:19.5px;line-height:19.5px;color:#3b3b3b;transform:scaleX(1.0822);font-family:'Liberation Sans',sans-serif;">Electric</div>
<div class="t" style="left:1205.30px;top:900px;font-size:19.5px;line-height:19.5px;color:#3b3b3b;transform:scaleX(1.0573);font-family:'Liberation Sans',sans-serif;">Autom…</div>
<div style="left:1302px;top:895px;width:99px;height:29px;background:#d32f2f"></div>
<div class="t" style="left:1405.30px;top:900px;font-size:19.5px;line-height:19.5px;color:#3b3b3b;transform:scaleX(1.0953);font-family:'Liberation Sans',sans-serif;">147</div>
<div class="t" style="left:1505.30px;top:900px;font-size:19.5px;line-height:19.5px;color:#3b3b3b;transform:scaleX(1.0953);font-family:'Liberation Sans',sans-serif;">236</div>
<div class="t" style="left:1605.30px;top:900px;font-size:19.5px;line-height:19.5px;color:#3b3b3b;transform:scaleX(0.9815);font-family:'Liberation Sans',sans-serif;">FWD</div>
<div class="t" style="left:1705.30px;top:900px;font-size:19.5px;line-height:19.5px;color:#3b3b3b;transform:scaleX(1.0953);font-family:'Liberation Sans',sans-serif;">5</div>
<div class="t" style="left:1805.30px;top:900px;font-size:19.5px;line-height:19.5px;color:#3b3b3b;transform:scaleX(1.0953);font-family:'Liberation Sans',sans-serif;">4</div>
<div style="left:357px;top:924px;width:44px;height:2px;background:#c9c9c9"></div>
<div style="left:402px;top:924px;width:1476px;height:1px;background:#d9d9d9"></div>
<div class="t" style="left:357.30px;top:931px;font-size:19.5px;line-height:19.5px;color:#3b3b3b;transform:scaleX(1.0953);font-family:'Liberation Sans',sans-serif;">98</div>
<div class="t" style="left:405.30px;top:930px;font-size:19.5px;line-height:19.5px;color:#3b3b3b;transform:scaleX(1.0953);font-family:'Liberation Sans',sans-serif;">97</div>
<div class="t" style="left:505.30px;top:930px;font-size:19.5px;line-height:19.5px;color:#3b3b3b;transform:scaleX(1.0795);font-family:'Liberation Sans',sans-serif;">Hyundai</div>
<div class="t" style="left:605.30px;top:930px;font-size:19.5px;line-height:19.5px;color:#3b3b3b;transform:scaleX(1.0865);font-family:'Liberation Sans',sans-serif;">Ioniq 5</div>
<div class="t" style="left:705.30px;top:930px;font-size:19.5px;line-height:19.5px;color:#3b3b3b;transform:scaleX(1.0953);font-family:'Liberation Sans',sans-serif;">2023</div>
<div class="t" style="left:805.30px;top:930px;font-size:19.5px;line-height:19.5px;color:#3b3b3b;transform:scaleX(1.0160);font-family:'Liberation Sans',sans-serif;">Teal</div>
<div class="t" style="left:905.30px;top:930px;font-size:19.5px;line-height:19.5px;color:#3b3b3b;transform:scaleX(1.0953);font-family:'Liberation Sans',sans-serif;">45900</div>
<div class="t" style="left:1005.30px;top:930px;font-size:19.5px;line-height:19.5px;color:#3b3b3b;transform:scaleX(1.0953);font-family:'Liberation Sans',sans-serif;">7800</div>
<div class="t" style="left:1105.30px;top:930px;font-size:19.5px;line-height:19.5px;color:#3b3b3b;transform:scaleX(1.0822);font-family:'Liberation Sans',sans-serif;">Electric</div>
<div class="t" style="left:1205.30px;top:930px;font-size:19.5px;line-height:19.5px;color:#3b3b3b;transform:scaleX(1.0573);font-family:'Liberation Sans',sans-serif;">Autom…</div>
<div style="left:1302px;top:925px;width:99px;height:29px;background:#d32f2f"></div>
<div class="t" style="left:1405.30px;top:930px;font-size:19.5px;line-height:19.5px;color:#3b3b3b;transform:scaleX(1.0953);font-family:'Liberation Sans',sans-serif;">225</div>
<div class="t" style="left:1505.30px;top:930px;font-size:19.5px;line-height:19.5px;color:#3b3b3b;transform:scaleX(1.0953);font-family:'Liberation Sans',sans-serif;">258</div>
<div class="t" style="left:1605.30px;top:930px;font-size:19.5px;line-height:19.5px;color:#3b3b3b;transform:scaleX(0.9748);font-family:'Liberation Sans',sans-serif;">RWD</div>
<div class="t" style="left:1705.30px;top:930px;font-size:19.5px;line-height:19.5px;color:#3b3b3b;transform:scaleX(1.0953);font-family:'Liberation Sans',sans-serif;">5</div>
<div class="t" style="left:1805.30px;top:930px;font-size:19.5px;line-height:19.5px;color:#3b3b3b;transform:scaleX(1.0953);font-family:'Liberation Sans',sans-serif;">4</div>
<div style="left:357px;top:954px;width:44px;height:2px;background:#c9c9c9"></div>
<div style="left:402px;top:954px;width:1476px;height:1px;background:#d9d9d9"></div>
<div class="t" style="left:357.30px;top:961px;font-size:19.5px;line-height:19.5px;color:#3b3b3b;transform:scaleX(1.0953);font-family:'Liberation Sans',sans-serif;">99</div>
<div class="t" style="left:405.30px;top:960px;font-size:19.5px;line-height:19.5px;color:#3b3b3b;transform:scaleX(1.0953);font-family:'Liberation Sans',sans-serif;">98</div>
<div class="t" style="left:505.30px;top:960px;font-size:19.5px;line-height:19.5px;color:#3b3b3b;transform:scaleX(1.0243);font-family:'Liberation Sans',sans-serif;">Kia</div>
<div class="t" style="left:605.30px;top:960px;font-size:19.5px;line-height:19.5px;color:#3b3b3b;transform:scaleX(0.9888);font-family:'Liberation Sans',sans-serif;">EV6</div>
<div class="t" style="left:705.30px;top:960px;font-size:19.5px;line-height:19.5px;color:#3b3b3b;transform:scaleX(1.0953);font-family:'Liberation Sans',sans-serif;">2022</div>
<div class="t" style="left:805.30px;top:960px;font-size:19.5px;line-height:19.5px;color:#3b3b3b;transform:scaleX(1.0563);font-family:'Liberation Sans',sans-serif;">Gray</div>
<div class="t" style="left:905.30px;top:960px;font-size:19.5px;line-height:19.5px;color:#3b3b3b;transform:scaleX(1.0953);font-family:'Liberation Sans',sans-serif;">48500</div>
<div class="t" style="left:1005.30px;top:960px;font-size:19.5px;line-height:19.5px;color:#3b3b3b;transform:scaleX(1.0953);font-family:'Liberation Sans',sans-serif;">9200</div>
<div class="t" style="left:1105.30px;top:960px;font-size:19.5px;line-height:19.5px;color:#3b3b3b;transform:scaleX(1.0822);font-family:'Liberation Sans',sans-serif;">Electric</div>
<div class="t" style="left:1205.30px;top:960px;font-size:19.5px;line-height:19.5px;color:#3b3b3b;transform:scaleX(1.0573);font-family:'Liberation Sans',sans-serif;">Autom…</div>
<div style="left:1302px;top:955px;width:99px;height:29px;background:#d32f2f"></div>
<div class="t" style="left:1405.30px;top:960px;font-size:19.5px;line-height:19.5px;color:#3b3b3b;transform:scaleX(1.0953);font-family:'Liberation Sans',sans-serif;">225</div>
<div class="t" style="left:1505.30px;top:960px;font-size:19.5px;line-height:19.5px;color:#3b3b3b;transform:scaleX(1.0953);font-family:'Liberation Sans',sans-serif;">258</div>
<div class="t" style="left:1605.30px;top:960px;font-size:19.5px;line-height:19.5px;color:#3b3b3b;transform:scaleX(0.9748);font-family:'Liberation Sans',sans-serif;">RWD</div>
<div class="t" style="left:1705.30px;top:960px;font-size:19.5px;line-height:19.5px;color:#3b3b3b;transform:scaleX(1.0953);font-family:'Liberation Sans',sans-serif;">5</div>
<div class="t" style="left:1805.30px;top:960px;font-size:19.5px;line-height:19.5px;color:#3b3b3b;transform:scaleX(1.0953);font-family:'Liberation Sans',sans-serif;">4</div>
<div style="left:357px;top:984px;width:44px;height:2px;background:#c9c9c9"></div>
<div style="left:402px;top:984px;width:1476px;height:1px;background:#d9d9d9"></div>
<div class="t" style="left:357.30px;top:991px;font-size:19.5px;line-height:19.5px;color:#3b3b3b;transform:scaleX(1.0953);font-family:'Liberation Sans',sans-serif;">100</div>
<div class="t" style="left:405.30px;top:990px;font-size:19.5px;line-height:19.5px;color:#3b3b3b;transform:scaleX(1.0953);font-family:'Liberation Sans',sans-serif;">99</div>
<div class="t" style="left:505.30px;top:990px;font-size:19.5px;line-height:19.5px;color:#3b3b3b;transform:scaleX(1.0642);font-family:'Liberation Sans',sans-serif;">Rivian</div>
<div class="t" style="left:605.30px;top:990px;font-size:19.5px;line-height:19.5px;color:#3b3b3b;transform:scaleX(0.9842);font-family:'Liberation Sans',sans-serif;">R1T</div>
<div class="t" style="left:705.30px;top:990px;font-size:19.5px;line-height:19.5px;color:#3b3b3b;transform:scaleX(1.0953);font-family:'Liberation Sans',sans-serif;">2023</div>
<div class="t" style="left:805.30px;top:990px;font-size:19.5px;line-height:19.5px;color:#3b3b3b;transform:scaleX(1.0327);font-family:'Liberation Sans',sans-serif;">Yellow</div>
<div class="t" style="left:905.30px;top:990px;font-size:19.5px;line-height:19.5px;color:#3b3b3b;transform:scaleX(1.0953);font-family:'Liberation Sans',sans-serif;">78500</div>
<div class="t" style="left:1005.30px;top:990px;font-size:19.5px;line-height:19.5px;color:#3b3b3b;transform:scaleX(1.0953);font-family:'Liberation Sans',sans-serif;">5600</div>
<div class="t" style="left:1105.30px;top:990px;font-size:19.5px;line-height:19.5px;color:#3b3b3b;transform:scaleX(1.0822);font-family:'Liberation Sans',sans-serif;">Electric</div>
<div class="t" style="left:1205.30px;top:990px;font-size:19.5px;line-height:19.5px;color:#3b3b3b;transform:scaleX(1.0573);font-family:'Liberation Sans',sans-serif;">Autom…</div>
<div style="left:1302px;top:985px;width:99px;height:29px;background:#d32f2f"></div>
<div class="t" style="left:1405.30px;top:990px;font-size:19.5px;line-height:19.5px;color:#3b3b3b;transform:scaleX(1.0953);font-family:'Liberation Sans',sans-serif;">835</div>
<div class="t" style="left:1505.30px;top:990px;font-size:19.5px;line-height:19.5px;color:#3b3b3b;transform:scaleX(1.0953);font-family:'Liberation Sans',sans-serif;">908</div>
<div class="t" style="left:1605.30px;top:990px;font-size:19.5px;line-height:19.5px;color:#3b3b3b;transform:scaleX(0.9959);font-family:'Liberation Sans',sans-serif;">AWD</div>
<div class="t" style="left:1705.30px;top:990px;font-size:19.5px;line-height:19.5px;color:#3b3b3b;transform:scaleX(1.0953);font-family:'Liberation Sans',sans-serif;">5</div>
<div class="t" style="left:1805.30px;top:990px;font-size:19.5px;line-height:19.5px;color:#3b3b3b;transform:scaleX(1.0953);font-family:'Liberation Sans',sans-serif;">4</div>
<div style="left:501px;top:685px;width:1px;height:329px;background:#d9d9d9"></div>
<div style="left:601px;top:685px;width:1px;height:329px;background:#d9d9d9"></div>
<div style="left:701px;top:685px;width:1px;height:329px;background:#d9d9d9"></div>
<div style="left:801px;top:685px;width:1px;height:329px;background:#d9d9d9"></div>
<div style="left:901px;top:685px;width:1px;height:329px;background:#d9d9d9"></div>
<div style="left:1001px;top:685px;width:1px;height:329px;background:#d9d9d9"></div>
<div style="left:1101px;top:685px;width:1px;height:329px;background:#d9d9d9"></div>
<div style="left:1201px;top:685px;width:1px;height:329px;background:#d9d9d9"></div>
<div style="left:1301px;top:685px;width:1px;height:329px;background:#d9d9d9"></div>
<div style="left:1401px;top:685px;width:1px;height:329px;background:#d9d9d9"></div>
<div style="left:1501px;top:685px;width:1px;height:329px;background:#d9d9d9"></div>
<div style="left:1601px;top:685px;width:1px;height:329px;background:#d9d9d9"></div>
<div style="left:1701px;top:685px;width:1px;height:329px;background:#d9d9d9"></div>
<div style="left:1801px;top:685px;width:1px;height:329px;background:#d9d9d9"></div>
<div style="left:1879px;top:657px;width:13px;height:13px;box-sizing:border-box;background:#fff;border-left:1px solid #444;border-top:1px solid #444;border-right:2px solid #000;border-bottom:2px solid #000"></div>
<svg style="position:absolute;left:0;top:0;width:1920px;height:1080px;overflow:visible" width="1920" height="1080"><path d="M1882.0 664.5L1885.0 661.5L1888.0 664.5Z" fill="#8a8a8a"/></svg>
<div style="left:1879px;top:671px;width:13px;height:274px;box-sizing:border-box;background:#fff;border-left:1px solid #444;border-top:1px solid #444;border-right:2px solid #000;border-bottom:2px solid #000"></div>
<div style="left:1879px;top:1001px;width:13px;height:13px;box-sizing:border-box;background:#fff;border-left:1px solid #444;border-top:1px solid #444;border-right:2px solid #000;border-bottom:2px solid #000"></div>
<svg style="position:absolute;left:0;top:0;width:1920px;height:1080px;overflow:visible" width="1920" height="1080"><path d="M1882.0 1005.5L1885.0 1008.5L1888.0 1005.5Z" fill="#8a8a8a"/></svg>
<div style="left:357px;top:1015px;width:13px;height:13px;box-sizing:border-box;background:#fff;border-left:1px solid #444;border-top:1px solid #444;border-right:2px solid #000;border-bottom:2px solid #000"></div>
<svg style="position:absolute;left:0;top:0;width:1920px;height:1080px;overflow:visible" width="1920" height="1080"><path d="M364.5 1018.0L361.5 1021.0L364.5 1024.0Z" fill="#8a8a8a"/></svg>
<div style="left:371px;top:1015px;width:1044px;height:13px;box-sizing:border-box;background:#fff;border-left:1px solid #444;border-top:1px solid #444;border-right:2px solid #000;border-bottom:2px solid #000"></div>
<div style="left:1865px;top:1015px;width:13px;height:13px;box-sizing:border-box;background:#fff;border-left:1px solid #444;border-top:1px solid #444;border-right:2px solid #000;border-bottom:2px solid #000"></div>
<svg style="position:absolute;left:0;top:0;width:1920px;height:1080px;overflow:visible" width="1920" height="1080"><path d="M1869.5 1018.0L1872.5 1021.0L1869.5 1024.0Z" fill="#8a8a8a"/></svg>
</body></html>
